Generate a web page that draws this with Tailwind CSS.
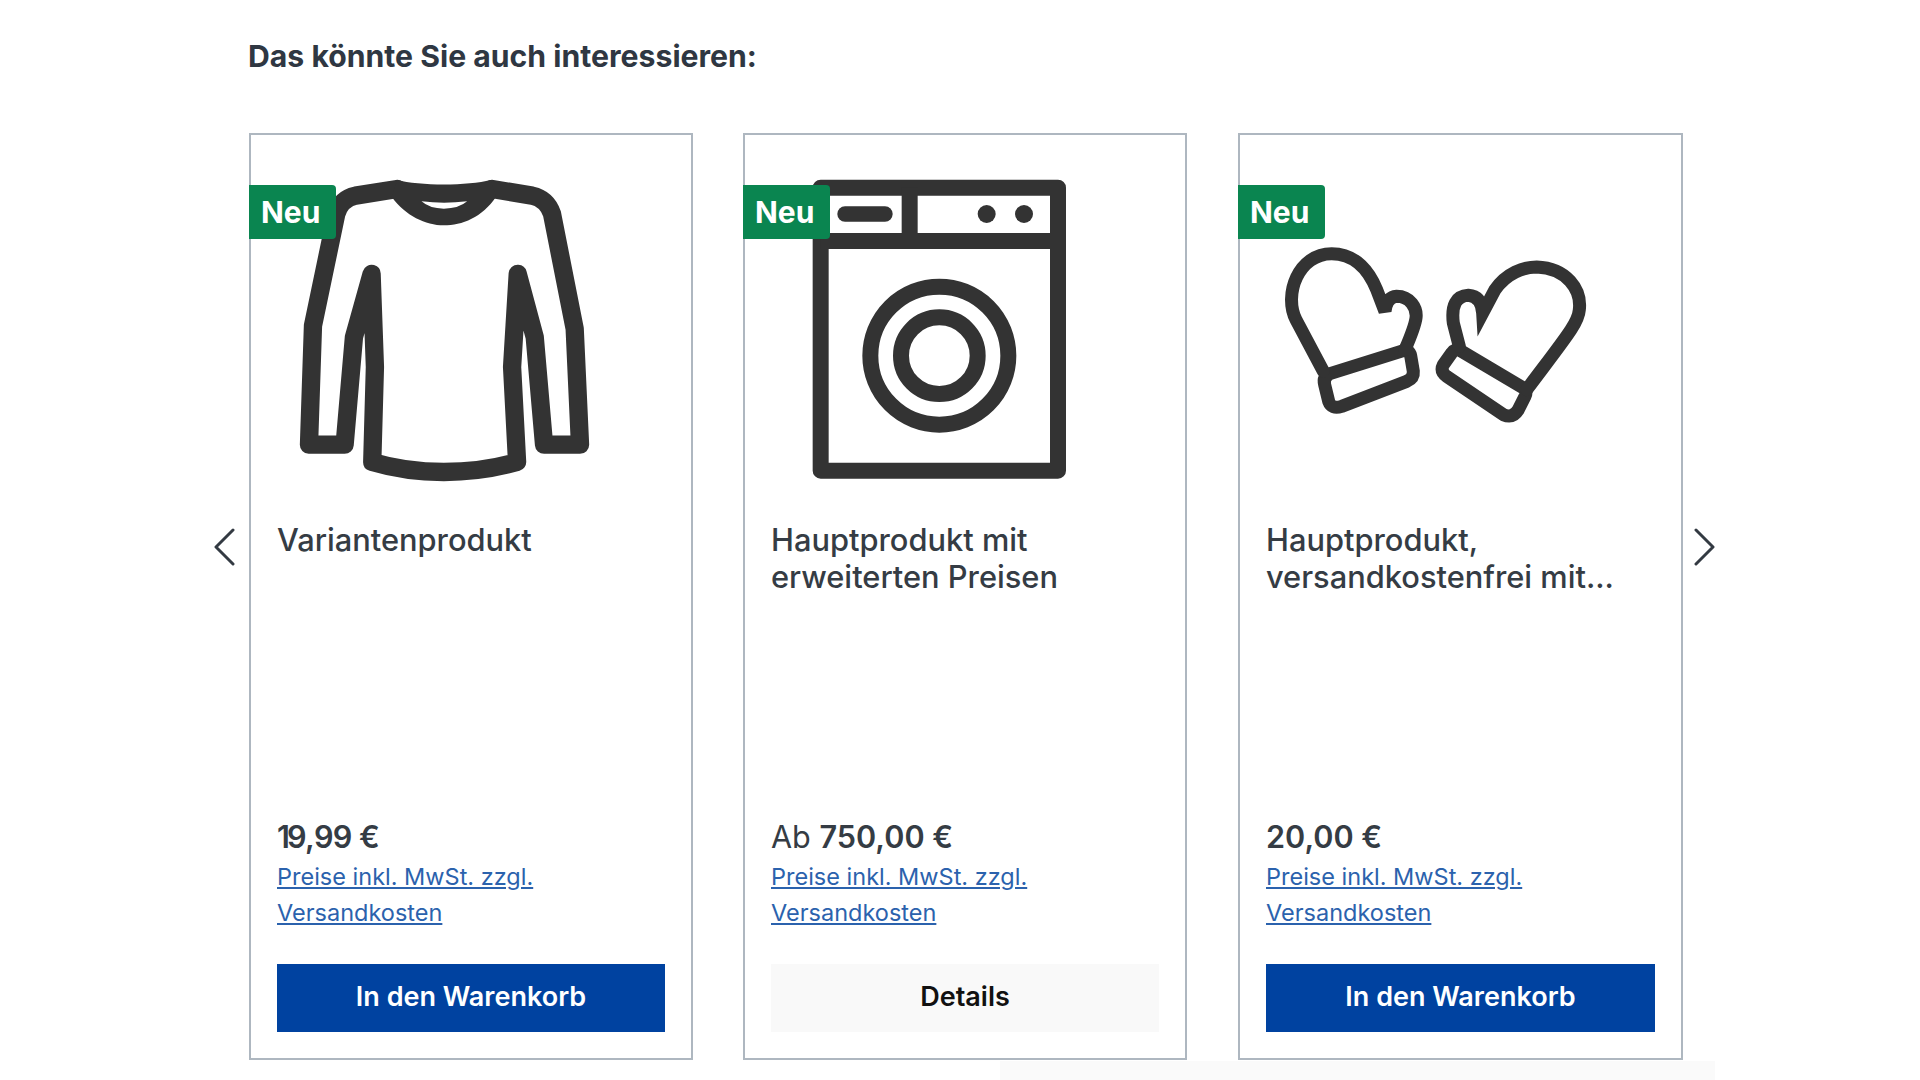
<!DOCTYPE html>
<html lang="de">
<head>
<meta charset="utf-8">
<title>Das könnte Sie auch interessieren</title>
<script src="https://cdn.jsdelivr.net/npm/@tailwindcss/browser@4"></script>
</head>
<body class="bg-white font-['Inter','Liberation_Sans',sans-serif]">
<div class="w-[1920px] h-[1080px] overflow-hidden flex flex-col">
  <h2 class="ml-[248px] mt-[37px] h-[38px] text-[30.2px] leading-[38px] font-bold text-[#2f3742]">Das könnte Sie auch interessieren:</h2>
  <div class="mt-[58px] flex items-start">
    <svg class="ml-[213px] mt-[395px] w-[22px] h-[38px]" viewBox="0 0 22 38" fill="none" stroke="#333a42" stroke-width="3" stroke-linecap="round" stroke-linejoin="round"><path d="M20 2 L3 19 L20 36"/></svg>
    <div class="ml-[14px] flex gap-[50px]">

      <article class="relative w-[444px] h-[927px] border-2 border-[#aeb7c0] flex flex-col px-[26px] pb-[26px]">
        <span class="absolute left-[-2px] top-[50px] w-[87px] h-[54px] bg-[#0a8550] rounded-r-[4px] text-white text-[30px] leading-[54px] font-bold pl-[12px]">Neu</span>
        <div class="h-[386px] shrink-0">
          <svg class="ml-[22px] mt-[42px] w-[293px] h-[307px]" viewBox="300 530 880 920" fill="none" stroke="#333333" stroke-width="55" stroke-linecap="round" stroke-linejoin="round">
            <path d="M595 565 L470 585 Q425 595 412 640 L342 975 L330 1333 L437 1333 L465 1010 L518 820 L528 1100 L520 1385 Q620 1415 735 1415 Q850 1415 955 1385 L940 1100 L957 820 L1008 1010 L1036 1333 L1144 1333 L1128 985 L1060 640 Q1045 595 1000 585 L880 565"/>
            <path fill="#333333" stroke="none" d="M595 538 C660 556 810 556 875 538 L892 588 C850 650 790 674 735 674 C680 674 620 645 578 588 Z"/>
            <path fill="#ffffff" stroke="none" d="M668 602 Q735 610 805 602 Q780 624 735 624 Q692 624 668 602 Z"/>
          </svg>
        </div>
        <h3 class="text-[30.8px] leading-[37px] font-medium text-[#353c44]">Variantenprodukt</h3>
        <div class="flex-1"></div>
        <p class="text-[30.6px] leading-[37px] mb-[1px] text-[#353c44]"><b class="font-semibold tracking-[-0.6px]"><span class="tracking-[-3px]">1</span>9,99 €</b></p>
        <a class="mt-[3px] text-[23.5px] leading-[36px] text-[#2b62ad] underline underline-offset-2">Preise inkl. MwSt. zzgl. Versandkosten</a>
        <button class="mt-[33px] h-[68px] pb-[2px] bg-[#0042a0] text-white text-[27px] font-semibold">In den Warenkorb</button>
      </article>

      <article class="relative w-[444px] h-[927px] border-2 border-[#aeb7c0] flex flex-col px-[26px] pb-[26px]">
        <div class="h-[386px] shrink-0">
          <svg class="ml-[41px] mt-[44px] w-[256px] h-[302px]" viewBox="276 178 768 906" fill="none" stroke="#333333" stroke-width="48" stroke-linejoin="round">
            <rect x="302" y="204" width="712" height="849"/>
            <path d="M302 364 H1014 M569 204 V364"/>
            <rect x="352" y="260" width="166" height="46" rx="23" fill="#333333" stroke="none"/>
            <circle cx="800" cy="283" r="27" fill="#333333" stroke="none"/>
            <circle cx="912" cy="283" r="27" fill="#333333" stroke="none"/>
            <circle cx="658" cy="708" r="207"/>
            <circle cx="658" cy="708" r="115"/>
          </svg>
        </div>
        <span class="absolute left-[-2px] top-[50px] w-[87px] h-[54px] bg-[#0a8550] rounded-r-[4px] text-white text-[30px] leading-[54px] font-bold pl-[12px]">Neu</span>
        <h3 class="text-[30.8px] leading-[37px] font-medium text-[#353c44]">Hauptprodukt mit<br>erweiterten Preisen</h3>
        <div class="flex-1"></div>
        <p class="text-[30.6px] leading-[37px] mb-[1px] text-[#353c44]">Ab <b class="font-semibold">750,00 €</b></p>
        <a class="mt-[3px] text-[23.5px] leading-[36px] text-[#2b62ad] underline underline-offset-2">Preise inkl. MwSt. zzgl. Versandkosten</a>
        <button class="mt-[33px] h-[68px] pb-[2px] bg-[#f9f9f9] text-[#111111] text-[27px] font-semibold">Details</button>
      </article>

      <article class="relative ml-px w-[445px] h-[927px] border-2 border-[#aeb7c0] flex flex-col px-[26px] pb-[26px]">
        <span class="absolute left-[-2px] top-[50px] w-[87px] h-[54px] bg-[#0a8550] rounded-[4px] rounded-l-none text-white text-[30px] leading-[54px] font-bold pl-[12px]">Neu</span>
        <div class="h-[386px] shrink-0">
          <svg class="ml-[14px] mt-[108px] w-[310px] h-[186px]" viewBox="180 370 930 558" fill="none" stroke="#333333" stroke-width="39" stroke-linecap="round" stroke-linejoin="round">
            <path d="M330 762 L550 693 Q568 690 572 708 L580 755 Q582 775 560 785 L365 860 Q335 870 326 845 L314 795 Q308 772 330 762 Z"/>
            <path stroke-linejoin="miter" d="M310 755 L228 600 C190 525 235 402 335 402 C410 402 450 460 470 510 L495 575 Q500 532 530 530 C570 530 592 565 588 595 Q585 620 555 690"/>
            <path d="M720 692 L910 805 Q922 815 915 830 L895 870 Q878 897 850 885 L680 770 Q660 755 670 735 L695 700 Q705 685 720 692 Z"/>
            <path stroke-linejoin="miter" d="M718 680 L700 610 Q690 530 745 527 Q785 530 788 580 L825 510 C860 460 910 442 950 442 C1040 445 1085 510 1078 570 C1075 610 1040 650 920 810"/>
          </svg>
        </div>
        <h3 class="text-[30.8px] leading-[37px] font-medium text-[#353c44]">Hauptprodukt,<br>versandkostenfrei mit...</h3>
        <div class="flex-1"></div>
        <p class="text-[30.6px] leading-[37px] mb-[1px] text-[#353c44]"><b class="font-semibold">20,00 €</b></p>
        <a class="mt-[3px] text-[23.5px] leading-[36px] text-[#2b62ad] underline underline-offset-2">Preise inkl. MwSt. zzgl. Versandkosten</a>
        <button class="mt-[33px] h-[68px] pb-[2px] bg-[#0042a0] text-white text-[27px] font-semibold">In den Warenkorb</button>
      </article>
    </div>
    <svg class="ml-[11px] mt-[395px] w-[22px] h-[38px]" viewBox="0 0 22 38" fill="none" stroke="#333a42" stroke-width="3" stroke-linecap="round" stroke-linejoin="round"><path d="M2 2 L19 19 L2 36"/></svg>
  </div>
  <div class="ml-[1000px] w-[715px] h-[19px] bg-[#fafafa] mt-px"></div>
</div>
</body>
</html>
